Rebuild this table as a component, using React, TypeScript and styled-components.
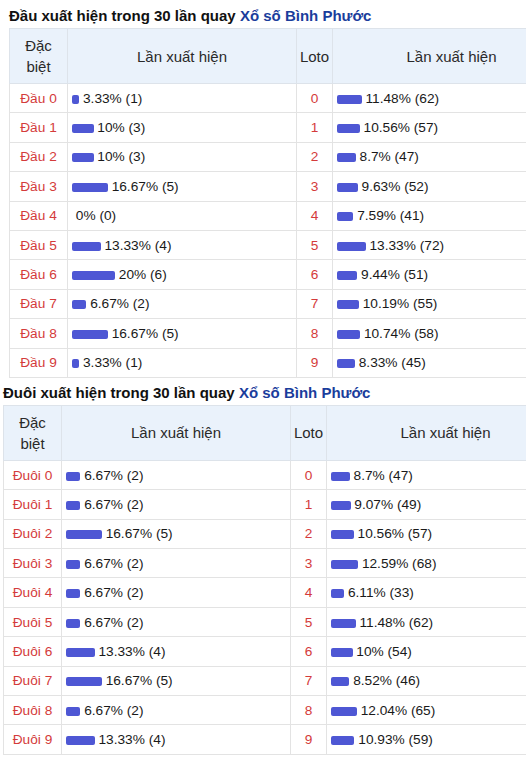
import React from 'react';
import styled, { createGlobalStyle } from 'styled-components';

const GlobalStyle = createGlobalStyle`
  html, body {
    margin: 0;
    padding: 0;
    background: #ffffff;
    overflow: hidden;
  }
  body {
    font-family: "Liberation Sans", Arial, sans-serif;
    color: #1a1a1a;
  }
`;

const Page = styled.div`
  width: 526px;
  padding-top: 7px;
  overflow: hidden;
`;

const Section = styled.section<{ $indent: number }>`
  padding-left: ${(p) => p.$indent}px;
  margin-bottom: 6px;
`;

const Title = styled.h3`
  margin: 0 0 3px 0;
  font-size: 15px;
  line-height: 18px;
  font-weight: bold;
  color: #111;
  white-space: nowrap;
`;

const Link = styled.a`
  color: #1a3d9c;
  text-decoration: none;
`;

const Table = styled.table<{ $width: number }>`
  width: ${(p) => p.$width}px;
  border-collapse: collapse;
  table-layout: fixed;
  font-size: 13.7px;
`;

const Col = styled.col<{ $w?: number }>`
  ${(p) => (p.$w ? `width: ${p.$w}px;` : '')}
`;

const HeadCell = styled.th`
  box-sizing: border-box;
  background: #eaf2fb;
  border: 1px solid #dde3ea;
  font-weight: normal;
  font-size: 15px;
  line-height: 21px;
  height: 55px;
  padding: 0;
  color: #2a2a2a;
  text-align: center;
`;

const Row = styled.tr`
  height: 29.4px;
`;

const KeyCell = styled.td`
  box-sizing: border-box;
  border: 1px solid #e3e3e3;
  text-align: center;
  color: #d43b3b;
  padding: 0;
  white-space: nowrap;
`;

const ValueCell = styled.td`
  box-sizing: border-box;
  border: 1px solid #e3e3e3;
  padding: 0 0 0 4px;
  white-space: nowrap;
  color: #1a1a1a;
`;

const Bar = styled.span`
  display: inline-block;
  height: 9px;
  border-radius: 2px;
  background: #4e57d4;
  vertical-align: -1px;
`;

type Item = [number, number];

const dauSpecial: Item[] = [
  [3.33, 1], [10, 3], [10, 3], [16.67, 5], [0, 0],
  [13.33, 4], [20, 6], [6.67, 2], [16.67, 5], [3.33, 1],
];
const dauLoto: Item[] = [
  [11.48, 62], [10.56, 57], [8.7, 47], [9.63, 52], [7.59, 41],
  [13.33, 72], [9.44, 51], [10.19, 55], [10.74, 58], [8.33, 45],
];
const duoiSpecial: Item[] = [
  [6.67, 2], [6.67, 2], [16.67, 5], [6.67, 2], [6.67, 2],
  [6.67, 2], [13.33, 4], [16.67, 5], [6.67, 2], [13.33, 4],
];
const duoiLoto: Item[] = [
  [8.7, 47], [9.07, 49], [10.56, 57], [12.59, 68], [6.11, 33],
  [11.48, 62], [10, 54], [8.52, 46], [12.04, 65], [10.93, 59],
];

const Value = ({ item }: { item: Item }) => (
  <ValueCell>
    <Bar style={{ width: `${item[0] * 2.15}px` }} /> {item[0]}% ({item[1]})
  </ValueCell>
);

const StatTable = ({
  label,
  special,
  loto,
  indent,
}: {
  label: string;
  special: Item[];
  loto: Item[];
  indent: number;
}) => (
  <Section $indent={indent}>
    <Title>
      {label} xuất hiện trong 30 lần quay <Link href="#">Xổ số Bình Phước</Link>
    </Title>
    <Table $width={562}>
      <colgroup>
        <Col $w={58} />
        <Col $w={229} />
        <Col $w={36} />
        <Col />
      </colgroup>
      <thead>
        <tr>
          <HeadCell>
            Đặc
            <br />
            biệt
          </HeadCell>
          <HeadCell>Lần xuất hiện</HeadCell>
          <HeadCell>Loto</HeadCell>
          <HeadCell>Lần xuất hiện</HeadCell>
        </tr>
      </thead>
      <tbody>
        {special.map((item, i) => (
          <Row key={i}>
            <KeyCell>
              {label} {i}
            </KeyCell>
            <Value item={item} />
            <KeyCell>{i}</KeyCell>
            <Value item={loto[i]} />
          </Row>
        ))}
      </tbody>
    </Table>
  </Section>
);

export default function App() {
  return (
    <Page>
      <GlobalStyle />
      <StatTable label="Đầu" special={dauSpecial} loto={dauLoto} indent={9} />
      <StatTable label="Đuôi" special={duoiSpecial} loto={duoiLoto} indent={3} />
    </Page>
  );
}
